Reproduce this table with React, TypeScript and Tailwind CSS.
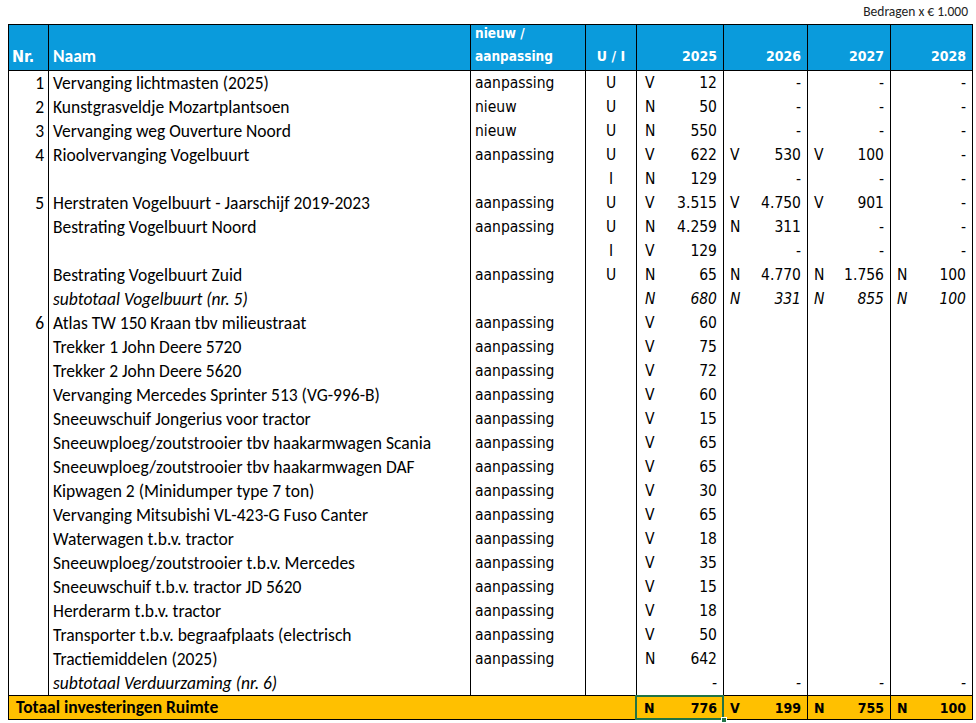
import React from "react";

type Y = [string, string];
type R = { nr?: string; naam: string; it?: boolean; t?: string; ui?: string; y: Y[] };

const D: Y = ["", "-"];
const E: Y = ["", ""];

const rows: R[] = [
  { nr: "1", naam: "Vervanging lichtmasten (2025)", t: "aanpassing", ui: "U", y: [["V", "12"], D, D, D] },
  { nr: "2", naam: "Kunstgrasveldje Mozartplantsoen", t: "nieuw", ui: "U", y: [["N", "50"], D, D, D] },
  { nr: "3", naam: "Vervanging weg Ouverture Noord", t: "nieuw", ui: "U", y: [["N", "550"], D, D, D] },
  { nr: "4", naam: "Rioolvervanging Vogelbuurt", t: "aanpassing", ui: "U", y: [["V", "622"], ["V", "530"], ["V", "100"], D] },
  { naam: "", ui: "I", y: [["N", "129"], D, D, D] },
  { nr: "5", naam: "Herstraten Vogelbuurt - Jaarschijf 2019-2023", t: "aanpassing", ui: "U", y: [["V", "3.515"], ["V", "4.750"], ["V", "901"], D] },
  { naam: "Bestrating Vogelbuurt Noord", t: "aanpassing", ui: "U", y: [["N", "4.259"], ["N", "311"], D, D] },
  { naam: "", ui: "I", y: [["V", "129"], D, D, D] },
  { naam: "Bestrating Vogelbuurt Zuid", t: "aanpassing", ui: "U", y: [["N", "65"], ["N", "4.770"], ["N", "1.756"], ["N", "100"]] },
  { naam: "subtotaal Vogelbuurt (nr. 5)", it: true, y: [["N", "680"], ["N", "331"], ["N", "855"], ["N", "100"]] },
  { nr: "6", naam: "Atlas TW 150 Kraan tbv milieustraat", t: "aanpassing", y: [["V", "60"], E, E, E] },
  { naam: "Trekker 1 John Deere 5720", t: "aanpassing", y: [["V", "75"], E, E, E] },
  { naam: "Trekker 2 John Deere 5620", t: "aanpassing", y: [["V", "72"], E, E, E] },
  { naam: "Vervanging Mercedes Sprinter 513 (VG-996-B)", t: "aanpassing", y: [["V", "60"], E, E, E] },
  { naam: "Sneeuwschuif Jongerius voor tractor", t: "aanpassing", y: [["V", "15"], E, E, E] },
  { naam: "Sneeuwploeg/zoutstrooier tbv haakarmwagen Scania", t: "aanpassing", y: [["V", "65"], E, E, E] },
  { naam: "Sneeuwploeg/zoutstrooier tbv haakarmwagen DAF", t: "aanpassing", y: [["V", "65"], E, E, E] },
  { naam: "Kipwagen 2 (Minidumper type 7 ton)", t: "aanpassing", y: [["V", "30"], E, E, E] },
  { naam: "Vervanging Mitsubishi VL-423-G Fuso Canter", t: "aanpassing", y: [["V", "65"], E, E, E] },
  { naam: "Waterwagen t.b.v. tractor", t: "aanpassing", y: [["V", "18"], E, E, E] },
  { naam: "Sneeuwploeg/zoutstrooier t.b.v. Mercedes", t: "aanpassing", y: [["V", "35"], E, E, E] },
  { naam: "Sneeuwschuif t.b.v. tractor JD 5620", t: "aanpassing", y: [["V", "15"], E, E, E] },
  { naam: "Herderarm t.b.v. tractor", t: "aanpassing", y: [["V", "18"], E, E, E] },
  { naam: "Transporter t.b.v. begraafplaats (electrisch", t: "aanpassing", y: [["V", "50"], E, E, E] },
  { naam: "Tractiemiddelen (2025)", t: "aanpassing", y: [["N", "642"], E, E, E] },
  { naam: "subtotaal Verduurzaming (nr. 6)", it: true, y: [D, D, D, D] },
];

const cal = "font-['Carlito','Lato',sans-serif]";
const tah = "font-['DejaVu_Sans_Condensed','DejaVu_Sans',sans-serif]";
const yw = ["w-[87px] pl-[8px]", "w-[84px] pl-[6px]", "w-[83px] pl-[6px]", "w-[82px] pl-[6px]"];

export default function App() {
  return (
    <div className="w-[976px] h-[723px] bg-white text-black overflow-hidden">
      <div className={`${cal} h-[24px] flex justify-end items-center pr-[8px] text-[13.5px] text-[#222]`}>Bedragen x € 1.000</div>
      <div className="ml-[8px] w-[965px] border border-black">
        {/* header */}
        <div className="flex h-[46px] bg-[#0a9bdc] text-white font-bold border-b border-black">
          <div className={`${tah} w-[39px] flex items-end pb-[2px] pl-[3px] text-[16px] leading-[23px]`}>Nr.</div>
          <div className={`${cal} w-[422px] border-l border-black flex items-end pb-[1px] pl-[4px] text-[17.5px]`}>Naam</div>
          <div className={`${tah} w-[115px] border-l border-black flex flex-col justify-end pb-[2px] pl-[4px] text-[13.5px] leading-[23px]`}>
            <span>nieuw /</span>
            <span>aanpassing</span>
          </div>
          <div className={`${tah} w-[51px] border-l border-black flex items-end justify-center pb-[2px] text-[14px] leading-[23px]`}>U / I</div>
          {["2025", "2026", "2027", "2028"].map((yr, i) => (
            <div key={yr} className={`${tah} ${yw[i]} border-l border-black flex items-end justify-end pr-[6px] pb-[2px] text-[14px] leading-[23px]`}>{yr}</div>
          ))}
        </div>
        {/* body */}
        {rows.map((r, idx) => (
          <div key={idx} className="flex h-[24px]">
            <div className={`${cal} w-[39px] flex items-center justify-end pr-[4px] text-[17.5px]`}>{r.nr}</div>
            <div className={`${cal} w-[422px] border-l border-black flex items-center pl-[4px] text-[17.5px] whitespace-nowrap ${r.it ? "italic" : ""}`}>{r.naam}</div>
            <div className={`${tah} w-[115px] border-l border-black flex items-center pl-[4px] pt-[2px] text-[15.5px]`}>{r.t}</div>
            <div className={`${tah} w-[51px] border-l border-black flex items-center justify-center pt-[2px] text-[15.5px]`}>{r.ui}</div>
            {r.y.map((v, i) => (
              <div key={i} className={`${tah} ${yw[i]} border-l border-black flex items-center justify-between pr-[6px] pt-[2px] text-[15.5px] ${r.it ? "italic" : ""}`}>
                <span>{v[0]}</span>
                <span>{v[1]}</span>
              </div>
            ))}
          </div>
        ))}
        {/* total */}
        <div className="flex h-[24px] bg-[#ffc000] border-t border-black font-bold">
          <div className={`${cal} w-[627px] flex items-center pl-[7px] text-[17.5px]`}>Totaal investeringen Ruimte</div>
          {[["N", "776"], ["V", "199"], ["N", "755"], ["N", "100"]].map((v, i) => (
            <div key={i} className={`${tah} ${yw[i]} ${i === 0 ? "relative" : "border-l border-black"} flex items-center justify-between pr-[6px] pt-[1px] text-[14px]`}>
              {i === 0 && (
                <>
                  <div className="absolute left-[-1px] top-[-1px] right-[-1px] bottom-[-1px] border-2 border-[#217346]" />
                  <div className="absolute right-[-4px] bottom-[-4px] w-[6px] h-[6px] bg-[#217346] border border-white" />
                </>
              )}
              <span>{v[0]}</span>
              <span>{v[1]}</span>
            </div>
          ))}
        </div>
      </div>
    </div>
  );
}
